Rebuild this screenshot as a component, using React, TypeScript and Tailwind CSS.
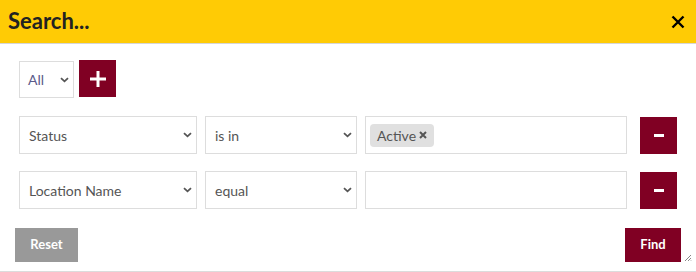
import React from "react";

const font = { fontFamily: "Lato, 'Open Sans', sans-serif" };

const Chevron = () => (
  <svg width="9" height="6" viewBox="0 0 9 6" className="shrink-0">
    <path d="M1 1.2 L4.5 4.4 L8 1.2" fill="none" stroke="#555" strokeWidth="1.8" />
  </svg>
);

const SelectBox = ({ label, width }: { label: string; width: string }) => (
  <div
    className={`${width} h-[38px] border border-[#ddd] bg-white flex items-center justify-between pl-[9px] pr-[4px] text-[14px] text-[#555]`}
  >
    <span>{label}</span>
    <Chevron />
  </div>
);

const MinusButton = () => (
  <button className="w-[37px] h-[37px] bg-[#800023] flex items-center justify-center">
    <span className="block w-[10px] h-[3px] bg-white" />
  </button>
);

export default function App() {
  return (
    <div className="w-[696px] h-[272px] bg-white flex flex-col" style={font}>
      <div className="h-[44px] bg-[#ffcb05] border-b border-[#d6d6d6] flex items-center justify-between pl-[8px] pr-[11px] shrink-0">
        <h1 className="text-[22px] font-bold text-[#222] leading-none -mt-[2px]">
          Search...
        </h1>
        <svg width="14" height="14" viewBox="0 0 14 14">
          <path d="M1.5 1.5 L12.5 12.5 M12.5 1.5 L1.5 12.5" stroke="#000" strokeWidth="2.4" />
        </svg>
      </div>

      <div className="flex-1 flex flex-col border-b border-[#dcdcdc]">
        <div className="flex items-start gap-[5px] pl-[19px] pt-[16px]">
          <div className="w-[55px] h-[37px] mt-[1px] border border-[#ddd] flex items-center justify-between pl-[8px] pr-[4px] text-[14px] text-[#5b5b8a]">
            <span>All</span>
            <Chevron />
          </div>
          <button className="w-[37px] h-[37px] bg-[#800023] flex items-center justify-center">
            <svg width="16" height="16" viewBox="0 0 16 16">
              <path d="M8 0 V16 M0 8 H16" stroke="#fff" strokeWidth="3" />
            </svg>
          </button>
        </div>

        <div className="flex items-center pl-[19px] mt-[18px]">
          <SelectBox label="Status" width="w-[178px]" />
          <div className="w-[8px]" />
          <SelectBox label="is in" width="w-[152px]" />
          <div className="w-[8px]" />
          <div className="w-[262px] h-[38px] border border-[#ddd] flex items-center pl-[4px]">
            <span className="h-[23px] px-[7px] rounded-[4px] bg-[#e0e0e0] text-[14px] text-[#555] flex items-center gap-[3px]">
              Active
              <svg width="8" height="8" viewBox="0 0 8 8">
                <path d="M1 1 L7 7 M7 1 L1 7" stroke="#555" strokeWidth="2" />
              </svg>
            </span>
          </div>
          <div className="w-[13px]" />
          <MinusButton />
        </div>

        <div className="flex items-center pl-[19px] mt-[17px]">
          <SelectBox label="Location Name" width="w-[178px]" />
          <div className="w-[8px]" />
          <SelectBox label="equal" width="w-[152px]" />
          <div className="w-[8px]" />
          <div className="w-[262px] h-[38px] border border-[#ddd]" />
          <div className="w-[13px]" />
          <MinusButton />
        </div>

        <div className="flex items-center justify-between pl-[15px] pr-[15px] mt-[19px] relative">
          <button className="w-[63px] h-[34px] bg-[#999] text-white text-[13px] font-bold">
            Reset
          </button>
          <button className="w-[56px] h-[34px] bg-[#800023] text-white text-[13px] font-bold">
            Find
          </button>
          <svg width="8" height="8" viewBox="0 0 8 8" className="absolute right-[4px] bottom-[0px]">
            <path d="M7 1 L1 7 M7 4 L4 7 M7 6.5 L6.5 7" stroke="#888" strokeWidth="1" />
          </svg>
        </div>
      </div>
    </div>
  );
}
